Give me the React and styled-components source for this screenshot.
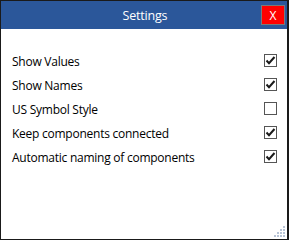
import React from "react";
import styled, { createGlobalStyle } from "styled-components";

const Global = createGlobalStyle`
  html, body { margin: 0; padding: 0; background: #fff; }
  body { font-family: "Segoe UI", "Open Sans", "Noto Sans", sans-serif; }
`;

const Window = styled.div`
  box-sizing: border-box;
  width: 289px;
  height: 240px;
  border: 1px solid #1a1a1a;
  border-right-width: 2px;
  background: #fff;
  display: flex;
  flex-direction: column;
  position: relative;
`;

const TitleBar = styled.div`
  height: 28px;
  background: #2b579a;
  display: flex;
  align-items: center;
  justify-content: center;
  position: relative;
  flex-shrink: 0;
`;

const Title = styled.span`
  color: #fff;
  font-family: "Open Sans", sans-serif;
  font-size: 12.5px;
  letter-spacing: -0.2px;
  line-height: 1;
  margin: 2px 0 0 2px;
`;

const CloseButton = styled.button`
  position: absolute;
  right: 2px;
  top: 4px;
  width: 24px;
  height: 20px;
  box-sizing: border-box;
  background: #ff0000;
  border: 1px solid #7a7a7a;
  color: #fff;
  font-family: "Open Sans", sans-serif;
  font-size: 12px;
  padding: 0;
  display: flex;
  align-items: center;
  justify-content: center;
`;

const Content = styled.div`
  padding: 19px 10px 0 11px;
  display: flex;
  flex-direction: column;
`;

const Row = styled.div`
  height: 24px;
  display: flex;
  align-items: center;
  justify-content: space-between;
`;

const Label = styled.span`
  font-family: "Open Sans", sans-serif;
  font-size: 12px;
  letter-spacing: -0.25px;
  color: #000;
  padding-top: 2px;
`;

const Box = styled.span`
  width: 13px;
  height: 13px;
  box-sizing: border-box;
  border: 1px solid #555;
  background: #fff;
  display: flex;
  align-items: center;
  justify-content: center;
`;

const Grip = styled.svg`
  position: absolute;
  right: 1px;
  bottom: 1px;
`;

const items = [
  ["Show Values", true],
  ["Show Names", true],
  ["US Symbol Style", false],
  ["Keep components connected", true],
  ["Automatic naming of components", true],
];

const Check = () => (
  <svg width="11" height="11" viewBox="0 0 11 11">
    <path d="M1.5 5.5 L4 8.2 L9.5 2" fill="none" stroke="#1a1a1a" strokeWidth="2" />
  </svg>
);

export default function App() {
  const dots = [
    [9, 0], [9, 3], [6, 3], [9, 6], [6, 6], [3, 6], [9, 9], [6, 9], [3, 9], [0, 9],
  ];
  return (
    <>
      <Global />
      <Window>
        <TitleBar>
          <Title>Settings</Title>
          <CloseButton>X</CloseButton>
        </TitleBar>
        <Content>
          {items.map(([label, checked]) => (
            <Row key={label}>
              <Label>{label}</Label>
              <Box>{checked && <Check />}</Box>
            </Row>
          ))}
        </Content>
        <Grip width="12" height="12" viewBox="0 0 12 12">
          {dots.map(([x, y], i) => (
            <rect key={i} x={x} y={y} width="2" height="2" fill="#b8c4d6" />
          ))}
        </Grip>
      </Window>
    </>
  );
}
